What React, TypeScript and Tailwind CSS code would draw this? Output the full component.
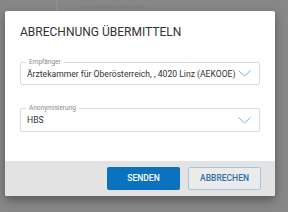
function Chevron() {
  return (
    <svg width="13" height="7" viewBox="0 0 13 7" fill="none" className="shrink-0">
      <polyline points="0.5,0.5 6.5,6 12.5,0.5" stroke="#7db0dc" strokeWidth="1" />
    </svg>
  );
}

function SelectField({ label, value, height }: { label: string; value: string; height: string }) {
  return (
    <div className={`relative flex items-center justify-between gap-[2px] rounded-[2px] border border-[#dadada] pl-[6px] pr-[8px] ${height}`}>
      <span className="absolute -top-[4px] left-[5px] bg-white px-[3px] text-[6.5px] leading-[7px] text-[#8a8a8a]">{label}</span>
      <span className="whitespace-nowrap text-[8.6px] leading-[12px] text-[#333333]">{value}</span>
      <Chevron />
    </div>
  );
}

export default function App() {
  return (
    <div className="h-[212px] w-[288px] overflow-hidden bg-[#878787] pl-[5px] pt-[11px] font-['Roboto',sans-serif]">
      <div className="-mt-[11px] -ml-[5px] flex h-[11px] items-center">
        <div className="h-full w-[58px] border-r-2 border-[#8d8d8d]" />
        <span className="ml-[22px] text-[6px] leading-[8px] text-[#7b7b7b] blur-[0.4px]">Kontaktdaten bearbeiten</span>
      </div>
      <div className="flex h-[185px] w-[270px] flex-col overflow-hidden rounded-[2px] bg-white shadow-[0_4px_10px_rgba(0,0,0,0.35)]">
        <h1 className="mt-[14px] px-[15px] text-[12px] leading-[15px] font-normal text-[#333333]">ABRECHNUNG ÜBERMITTELN</h1>
        <div className="mt-[22px] flex flex-col gap-[23px] px-[15px]">
          <SelectField label="Empfänger" value="Ärztekammer für Oberösterreich, , 4020 Linz (AEKOOE)" height="h-[23px]" />
          <SelectField label="Anonymisierung" value="HBS" height="h-[24px]" />
        </div>
        <div className="flex-1" />
        <div className="flex h-[35px] items-center justify-end gap-[8px] bg-[#e3e3e3] pr-[14px]">
          <button className="h-[23px] w-[73px] rounded-[2px] bg-[#0b72c0] text-[8.5px] font-medium text-white">SENDEN</button>
          <button className="h-[23px] w-[73px] rounded-[2px] border border-[#a6c6e2] bg-[#ebebeb] text-[8.5px] font-medium text-[#2f6fa8]">ABBRECHEN</button>
        </div>
      </div>
    </div>
  );
}
